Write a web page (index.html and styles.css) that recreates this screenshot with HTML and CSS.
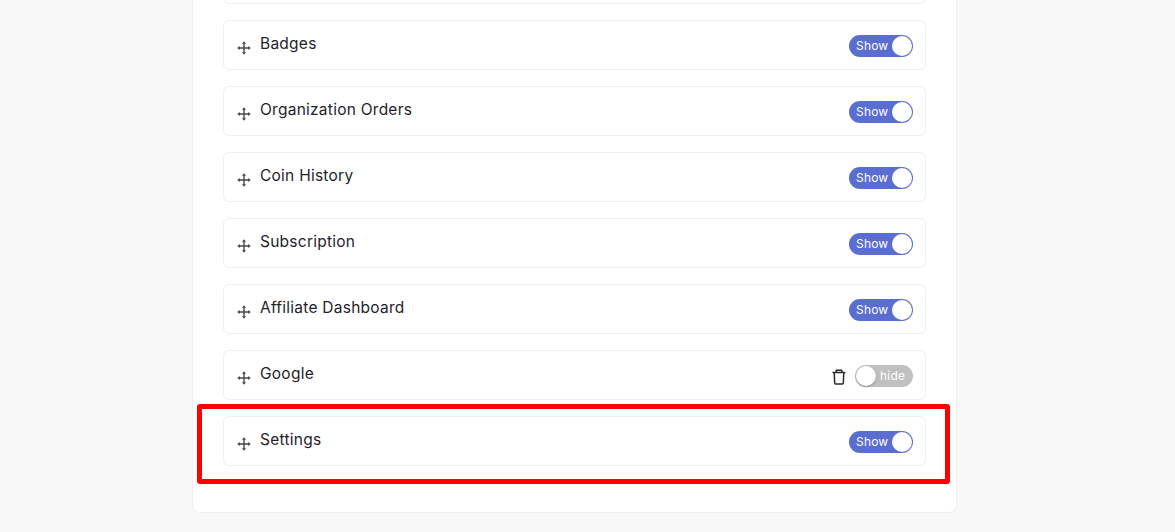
FILE: index.html
```html
<!DOCTYPE html>
<html lang="en">
<head>
<meta charset="utf-8">
<title>Menu settings</title>
<link rel="stylesheet" href="styles.css">
</head>
<body>
<svg class="defs" width="0" height="0" aria-hidden="true">
  <symbol id="move" viewBox="0 0 14 14">
    <path d="M7 1.500v11M1.500 7h11" fill="none" stroke="#484848" stroke-width="1.400"/>
    <path d="M5 2.800 7 .2l2 2.600zM5 11.200 7 13.800l2-2.600zM2.800 5 .2 7l2.600 2zM11.200 5 13.800 7l-2.600 2z" fill="#484848"/>
  </symbol>
</svg>
<main class="card">
  <ul class="list">
    <li class="row"></li>
    <li class="row"><span class="label"><svg class="move"><use href="#move"/></svg><span class="name">Badges</span></span><span class="toggle on"><span class="state">Show</span><span class="knob"></span></span></li>
    <li class="row"><span class="label"><svg class="move"><use href="#move"/></svg><span class="name">Organization Orders</span></span><span class="toggle on"><span class="state">Show</span><span class="knob"></span></span></li>
    <li class="row"><span class="label"><svg class="move"><use href="#move"/></svg><span class="name">Coin History</span></span><span class="toggle on"><span class="state">Show</span><span class="knob"></span></span></li>
    <li class="row"><span class="label"><svg class="move"><use href="#move"/></svg><span class="name">Subscription</span></span><span class="toggle on"><span class="state">Show</span><span class="knob"></span></span></li>
    <li class="row"><span class="label"><svg class="move"><use href="#move"/></svg><span class="name">Affiliate Dashboard</span></span><span class="toggle on"><span class="state">Show</span><span class="knob"></span></span></li>
    <li class="row"><span class="label"><svg class="move"><use href="#move"/></svg><span class="name">Google</span></span>
      <span class="actions">
        <svg class="trash" viewBox="0 0 16 16" aria-hidden="true"><path d="M1.500 3.600h13M5.200 3.400V1.200h5.600v2.200M3.200 3.800l.5 10.200c0 .6.4 1 1 1h6.600c.6 0 1-.4 1-1l.5-10.200" fill="none" stroke="#2b2b2b" stroke-width="1.500" stroke-linejoin="round"/></svg>
        <span class="toggle off"><span class="knob"></span><span class="state">hide</span></span>
      </span></li>
    <li class="row highlighted"><span class="label"><svg class="move"><use href="#move"/></svg><span class="name">Settings</span></span><span class="toggle on"><span class="state">Show</span><span class="knob"></span></span><span class="marker"></span></li>
  </ul>
</main>
</body>
</html>
```
FILE: styles.css
```css
* { box-sizing: border-box; }
html, body { margin: 0; height: 532px; overflow: hidden; background: #f8f8f8; }
body { font-family: "Inter", "Open Sans", sans-serif; color: #212529; }
.defs { position: absolute; }
.card {
  width: 765px;
  margin: -67px 0 0 192px;
  padding: 20px 30px 46px 30px;
  background: #fff;
  border: 1px solid #eff0f2;
  border-radius: 8px;
}
.list { list-style: none; margin: 0; padding: 0; display: flex; flex-direction: column; gap: 16px; }
.row {
  position: relative;
  height: 50px;
  display: flex;
  align-items: center;
  justify-content: space-between;
  padding: 0 12px 0 13px;
  border: 1px solid #eef0f3;
  border-radius: 6px;
  background: #fff;
}
.label { display: flex; align-items: center; gap: 9px; }
.move { width: 14px; height: 14px; margin-top: 5px; }
.name { font-size: 15.5px; font-weight: 400; letter-spacing: 0.25px; line-height: 20px; margin-top: -2px; color: #1f2329; }
.actions { display: flex; align-items: center; gap: 8px; margin-top: 2px; }
.trash { width: 16px; height: 16px; margin-top: 2px; }
.row > .toggle { margin-top: 2px; }
.toggle {
  display: flex;
  align-items: center;
  height: 22px;
  border-radius: 11px;
  font-size: 12px;
  font-weight: 400;
  letter-spacing: 0.2px;
  color: #fff;
  padding: 0 1px;
}
.toggle.on { width: 64px; background: #5a6dd0; justify-content: space-between; padding-left: 7px; }
.toggle.off { width: 58px; background: #c0c0c0; gap: 4px; padding-left: 1px; }
.state { margin-top: -2px; }
.knob { width: 20px; height: 20px; border-radius: 50%; background: #fff; }
.off .knob { box-shadow: 0 1px 2px rgba(0,0,0,.3); }
.marker {
  position: absolute;
  left: -27px;
  right: -25px;
  top: -13px;
  bottom: -19px;
  border: 5px solid #f00;
  border-radius: 3px;
  pointer-events: none;
}
```
